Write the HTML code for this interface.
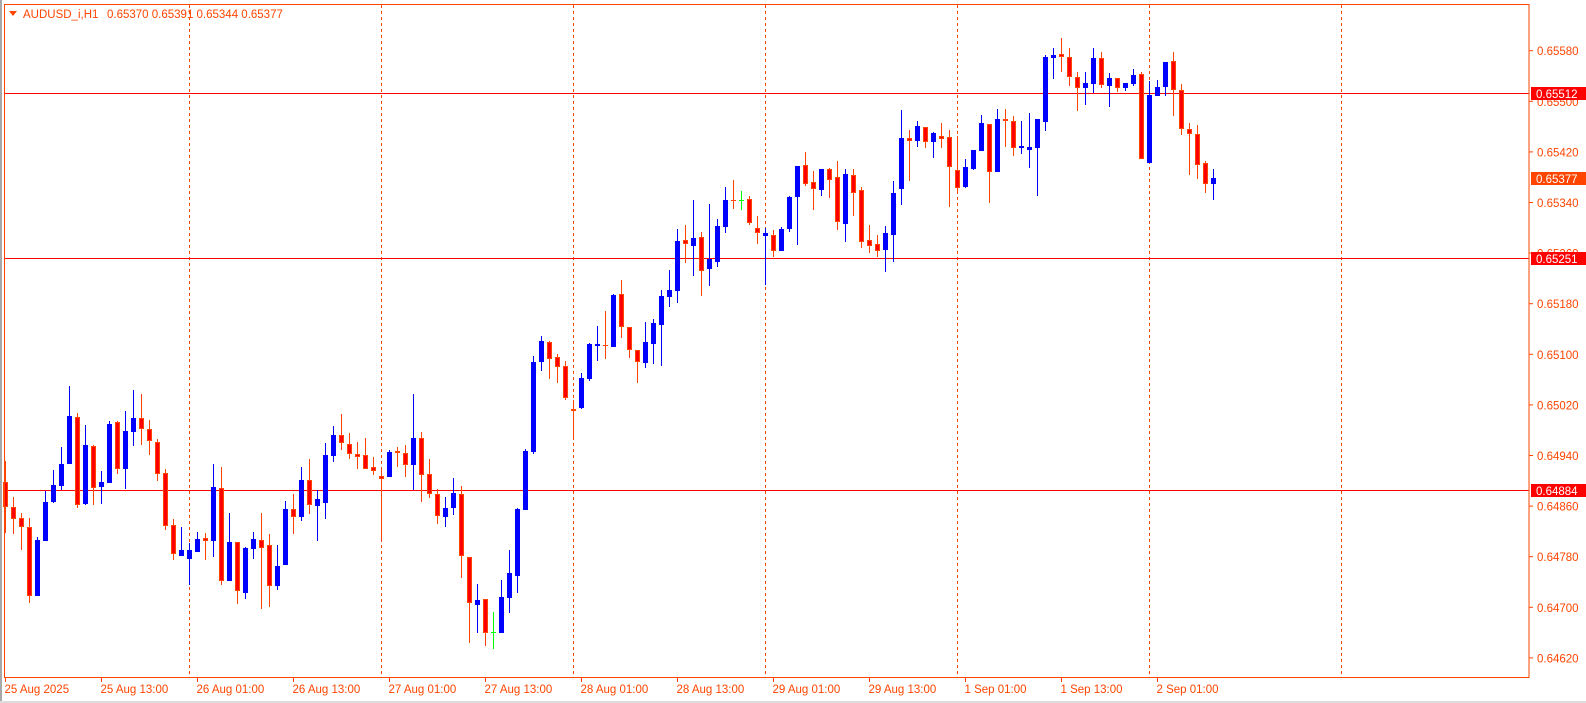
<!DOCTYPE html>
<html><head><meta charset="utf-8">
<style>
html,body{margin:0;padding:0;background:#fff;}
body{width:1586px;height:703px;overflow:hidden;position:relative;}
svg{position:absolute;left:0;top:0;}
text{font-family:"Liberation Sans",sans-serif;font-size:11.5px;}
</style></head><body>
<svg id="c" width="1586" height="703" xmlns="http://www.w3.org/2000/svg">
<rect x="0" y="0" width="2" height="703" fill="#a8a8a8"/>
<rect x="0" y="701" width="1586" height="2" fill="#dcdcdc"/>
<g id="grid"></g>
<g id="hl">
<line x1="4" y1="93.5" x2="1529" y2="93.5" stroke="#ff0000" stroke-width="1"/>
<line x1="4" y1="258.5" x2="1529" y2="258.5" stroke="#ff0000" stroke-width="1"/>
<line x1="4" y1="490.5" x2="1529" y2="490.5" stroke="#ff0000" stroke-width="1"/>
</g>
<g id="candles"></g>
<rect x="4.5" y="4.5" width="1524.5" height="673" fill="none" stroke="#ff4500" stroke-width="1"/>
<polygon points="9,11 17,11 13,16" fill="#ff4500"/>
<text x="23" y="18" fill="#ff4500">AUDUSD_i,H1</text>
<text x="107" y="18" fill="#ff4500">0.65370 0.65391 0.65344 0.65377</text>
<g id="axis"></g>
</svg>
<script>
var NS="http://www.w3.org/2000/svg";
function el(p,t,a,txt){var e=document.createElementNS(NS,t);for(var k in a)e.setAttribute(k,a[k]);if(txt!=null)e.textContent=txt;p.appendChild(e);return e;}
var grid=document.getElementById('grid');
for(var k=0;k<7;k++){var x=189.5+192*k;el(grid,'line',{x1:x,y1:5,x2:x,y2:677,stroke:'#ff4500','stroke-width':1,'stroke-dasharray':'3,3'});}
var D=`r 482 507 461 533
r 507 519 497 534
r 518 527 513 550
r 527 596 518 603
b 540 596 537 596
b 502 541 491 541
b 485 502 470 503
b 464 486 447 490
b 416 464 386 464
r 417 505 413 508
b 445 504 425 505
r 446 488 445 505
b 482 487 471 504
b 424 483 421 483
r 422 469 421 474
b 431 469 411 489
b 418 432 390 446
r 418 429 394 445
r 429 441 420 455
r 442 474 439 481
r 473 526 469 530
r 525 554 519 560
b 550 556 527 556
b 550 559 543 585
b 539 552 532 552
r 538 541 533 560
b 487 541 464 557
r 488 581 467 585
b 542 581 513 581
r 542 591 542 604
b 548 593 547 599
b 539 549 532 559
r 540 548 513 609
r 545 586 534 607
b 566 586 545 590
b 509 565 501 565
r 509 517 494 534
b 480 517 467 521
r 480 505 459 514
b 499 506 490 541
b 455 503 443 519
b 435 456 426 462
r 435 443 414 450
r 444 454 433 459
r 454 457 442 469
r 455 469 438 469
r 467 471 457 475
r 476 479 470 542
b 452 477 450 477
r 451 453 447 467
r 453 465 445 477
b 438 465 394 490
r 438 475 432 502
r 474 494 459 498
r 494 516 489 524
b 508 517 497 527
b 493 508 478 515
r 494 556 486 578
r 557 603 557 643
b 600 605 584 633
r 599 633 599 646
g 632 633 612 649
b 597 633 580 633
b 573 598 550 613
b 509 576 508 593
b 451 510 449 510
b 362 452 356 454
b 341 362 336 371
r 342 359 341 379
r 357 367 354 383
r 366 398 361 400
r 409 411 400 439
b 378 408 373 409
b 344 379 343 381
b 344 346 326 361
r 345 346 311 359
b 295 347 294 347
r 294 327 280 338
r 327 350 327 358
r 350 362 350 383
b 342 363 322 368
b 323 344 319 364
b 296 325 290 366
b 290 297 270 307
b 241 291 229 303
r 240 244 225 263
b 238 246 200 276
r 237 271 232 296
b 259 269 204 286
b 226 262 219 267
b 200 227 187 233
r 200 201 180 209
g 200 201 191 210
r 199 223 196 225
r 228 233 216 244
b 233 236 228 285
r 235 251 230 257
b 229 251 227 251
b 197 229 196 232
b 166 197 166 245
r 165 184 152 186
r 182 189 171 210
b 169 190 169 196
r 169 180 168 198
r 177 222 161 230
b 174 224 169 242
r 175 193 169 216
r 190 242 187 248
r 240 246 225 253
r 244 251 235 257
b 233 250 226 272
b 193 235 181 262
b 138 189 110 205
r 138 141 130 181
b 126 141 121 147
r 127 142 127 148
b 133 142 132 158
r 136 139 123 148
r 137 167 130 207
r 170 188 136 194
b 167 187 159 188
b 150 169 150 170
b 123 151 115 151
r 124 172 124 203
b 119 172 109 172
r 119 121 109 147
r 121 148 116 156
b 146 148 121 154
b 147 150 113 168
b 119 148 119 196
b 57 122 55 131
b 55 58 48 79
r 54 57 38 72
r 57 77 48 86
r 77 88 72 111
b 83 88 72 105
b 58 84 48 93
r 58 85 52 88
b 78 86 73 107
r 78 88 78 92
b 83 88 83 91
b 75 84 69 86
r 74 159 72 159
b 95 163 81 163
b 87 96 80 96
b 62 87 62 96
r 61 90 52 116
r 90 129 84 135
r 129 134 123 175
r 134 165 125 179
r 163 184 161 193
b 178 184 169 200`.split('\n');
var cg=document.getElementById('candles');
D.forEach(function(line,i){
  var p=line.trim().split(/\s+/);var t=p[0],bt=+p[1],bb=+p[2],wt=+p[3],wb=+p[4];
  var x=5+8*i;
  var wc=t=='b'?'#0000ff':(t=='g'?'#00ff00':'#ff4500');
  el(cg,'rect',{x:x,y:wt,width:1,height:Math.max(1,wb-wt),fill:wc});
  if(t=='g'){el(cg,'rect',{x:x-2,y:bt,width:5,height:1,fill:'#00ff00'});}
  else if(t=='b'){el(cg,'rect',{x:x-2,y:bt,width:5,height:Math.max(1,bb-bt),fill:'#0000ff'});}
  else{var h=Math.max(1,bb-bt);el(cg,'rect',{x:x-2,y:bt,width:5,height:h,fill:'#ff4500'});
    if(h>2)el(cg,'rect',{x:x-1,y:bt+1,width:3,height:h-2,fill:'#ff0000'});}
});
var ax=document.getElementById('axis');
var prices=['0.65580','0.65500','0.65420','0.65340','0.65260','0.65180','0.65100','0.65020','0.64940','0.64860','0.64780','0.64700','0.64620'];
prices.forEach(function(s,k){var y=50.7+50.6*k;
  el(ax,'line',{x1:1529,y1:y,x2:1533,y2:y,stroke:'#ff4500','stroke-width':1});
  el(ax,'text',{x:1537,y:y+4.5,fill:'#ff4500'},s);});
function lab(y,s,bg){el(ax,'rect',{x:1531,y:y-6.5,width:55,height:13,fill:bg});el(ax,'text',{x:1536,y:y+4.5,fill:'#ffffff'},s);}
lab(93.5,'0.65512','#ff0000');
lab(178.5,'0.65377','#ff4500');
lab(258.5,'0.65251','#ff0000');
lab(490.5,'0.64884','#ff0000');
var tl=['25 Aug 2025','25 Aug 13:00','26 Aug 01:00','26 Aug 13:00','27 Aug 01:00','27 Aug 13:00','28 Aug 01:00','28 Aug 13:00','29 Aug 01:00','29 Aug 13:00','1 Sep 01:00','1 Sep 13:00','2 Sep 01:00'];
tl.forEach(function(s,k){var x=5.5+96*k;
  el(ax,'line',{x1:x,y1:678,x2:x,y2:682,stroke:'#ff4500','stroke-width':1});
  el(ax,'text',{x:x-1,y:693,fill:'#ff4500'},s);});
</script>
</body></html>
